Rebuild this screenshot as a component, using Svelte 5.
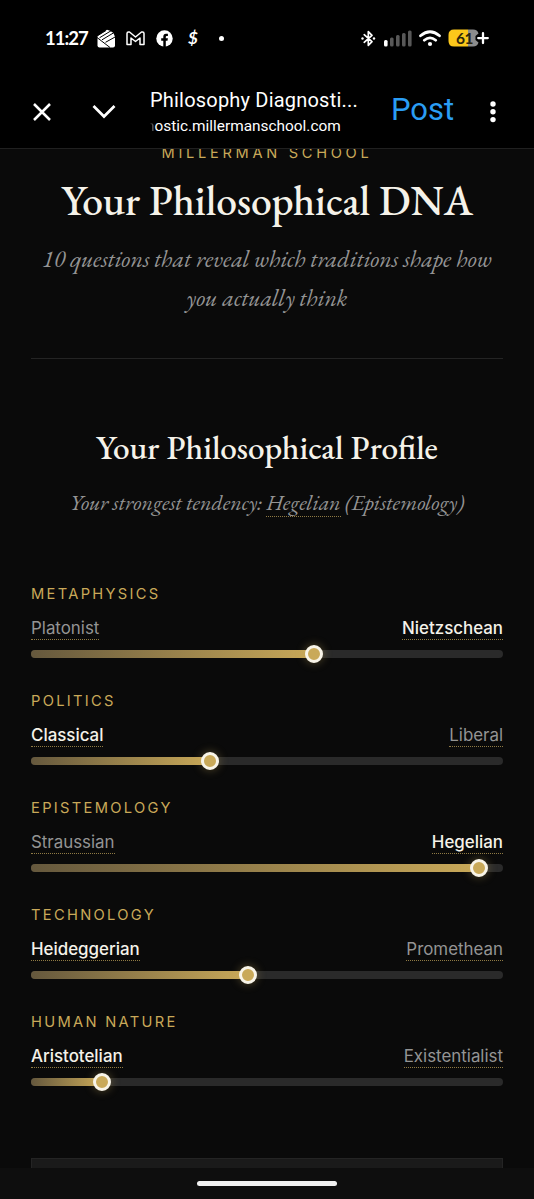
<script lang="ts">
  const title = "Philosophy Diagnosti...";

  // value is the thumb position in percent, lead is the side that wins
  const axes = [
    { name: "Metaphysics", left: "Platonist", right: "Nietzschean", value: 60, lead: "right" },
    { name: "Politics", left: "Classical", right: "Liberal", value: 38, lead: "left" },
    { name: "Epistemology", left: "Straussian", right: "Hegelian", value: 95, lead: "right" },
    { name: "Technology", left: "Heideggerian", right: "Promethean", value: 46, lead: "left" },
    { name: "Human Nature", left: "Aristotelian", right: "Existentialist", value: 15, lead: "left" },
  ];
</script>

<div class="phone">
  <div class="status">
    <span class="time">11:27</span>
    <svg class="mail" width="19" height="19" viewBox="0 0 19 19">
      <path d="M0.500 7 10 0.800 13 1.800 16.500 4 18 8V16.500Q18 18.500 16 18.500H2.500Q0.500 18.500 0.500 16.500Z" fill="#fff" />
      <path d="M0 7 9 1.500M2.500 8.800 14 1.800M5 10.800 17 3.600M0 8.500 13 18.500M8.500 13.300 19 7.500" stroke="#000" stroke-width="1" fill="none" />
    </svg>
    <svg class="gmail" width="19" height="15" viewBox="0 0 19 15">
      <path d="M1 13.500V2.500Q1 1 2.500 1H3.500L9.500 6 15.500 1H16.500Q18 1 18 2.500V13.500H14V7L9.500 10.500 5 7V13.500Z" fill="none" stroke="#fff" stroke-width="1.500" stroke-linejoin="round" />
    </svg>
    <svg class="fb" width="17" height="17" viewBox="0 0 17 17">
      <circle cx="8.500" cy="8.500" r="8.200" fill="#fff" />
      <path d="M7.300 17V10.800H5.200V8.200H7.300V6.700Q7.300 3.800 10 3.800H11.900V6.100H10.700Q9.800 6.100 9.800 7V8.200H11.900L11.500 10.800H9.800V17Z" fill="#000" />
    </svg>
    <span class="dollar">$</span>
    <i class="dot"></i>
    <svg class="bt" width="15" height="17" viewBox="0 0 15 17">
      <path d="M3.200 4.700 11 11.700 7.300 15.300V1.700L11 5.300 3.200 12.300" fill="none" stroke="#fff" stroke-width="1.700" stroke-linejoin="round" stroke-linecap="round" />
      <circle cx="1.500" cy="8.500" r="1.200" fill="#fff" />
      <circle cx="13" cy="8.500" r="1.200" fill="#fff" />
    </svg>
    <svg class="signal" width="28" height="17" viewBox="0 0 28 17">
      <rect x="0" y="10" width="3.600" height="6.500" rx="1.500" fill="#fff" />
      <rect x="6" y="7.500" width="3.600" height="9" rx="1.500" fill="#585858" />
      <rect x="12" y="5" width="3.600" height="11.500" rx="1.500" fill="#585858" />
      <rect x="18" y="3" width="3.600" height="13.500" rx="1.500" fill="#585858" />
      <rect x="24" y="0.500" width="3.600" height="16" rx="1.500" fill="#585858" />
    </svg>
    <svg class="wifi" width="22" height="17" viewBox="0 0 22 17">
      <path d="M1.500 5.800Q11-2.300 20.500 5.800M5.300 10.200Q11 5.400 16.700 10.200" fill="none" stroke="#fff" stroke-width="2.700" stroke-linecap="round" />
      <circle cx="11" cy="14" r="2.100" fill="#fff" />
    </svg>
    <svg class="battery" width="41" height="18" viewBox="0 0 41 18">
      <path d="M6 .5H20V17.500H6Q.5 17.500.5 12V6Q.5.500 6 .5Z" fill="#fcc81b" />
      <path d="M20 .5H25Q29.500.500 30.500 4.500L27.500 7V11L30.500 13.500Q29.500 17.500 25 17.500H20Z" fill="#8c8c8c" />
      <path d="M35 4.200V14M30.200 9.100H39.800" stroke="#fff" stroke-width="2.300" stroke-linecap="round" />
      <text x="8" y="14.500" class="level">61</text>
    </svg>
  </div>

  <div class="toolbar">
    <svg class="close" width="20" height="20" viewBox="0 0 20 20">
      <path d="M2 2 18 18M18 2 2 18" stroke="#fff" stroke-width="2.500" />
    </svg>
    <svg class="chevron" width="24" height="16" viewBox="0 0 24 16">
      <path d="M1.500 2 12 12.500 22.500 2" stroke="#fff" stroke-width="2.700" fill="none" />
    </svg>
    <div class="page">
      <div class="page-title">{title}</div>
      <div class="url"><span class="faded">n</span>ostic.millermanschool.com</div>
    </div>
    <span class="post">Post</span>
    <svg class="more" width="6" height="22" viewBox="0 0 6 22">
      <circle cx="3" cy="3" r="2.700" fill="#fff" />
      <circle cx="3" cy="10.800" r="2.700" fill="#fff" />
      <circle cx="3" cy="18.600" r="2.700" fill="#fff" />
    </svg>
  </div>

  <main>
    <header>
      <div class="brand">Millerman School</div>
      <h1>Your Philosophical DNA</h1>
      <p class="tagline">10 questions that reveal which traditions shape how<br />you actually think</p>
    </header>

    <h2>Your Philosophical Profile</h2>
    <p class="tendency">Your strongest tendency: <span class="term">Hegelian</span> (Epistemology)</p>

    {#each axes as axis}
      <section class="axis">
        <div class="axis-name">{axis.name}</div>
        <div class="ends">
          <span class:lead={axis.lead === "left"}>{axis.left}</span>
          <span class:lead={axis.lead === "right"}>{axis.right}</span>
        </div>
        <div class="track">
          <div class="fill" style="width: {axis.value}%">
            <i class="thumb"></i>
          </div>
        </div>
      </section>
    {/each}

    <div class="card"></div>
  </main>

  <div class="navbar"><i></i></div>
</div>

<style>
  :global(body) {
    margin: 0;
    background: #0a0a0a;
  }

  .phone {
    display: flex;
    flex-direction: column;
    width: 534px;
    height: 1199px;
    overflow: hidden;
    background: #0a0a0a;
    color: #fff;
    font-family: Inter, sans-serif;
  }

  .phone * {
    box-sizing: border-box;
  }

  svg {
    display: block;
    flex: none;
  }

  .status {
    display: flex;
    align-items: center;
    flex: none;
    height: 76px;
    padding-left: 45px;
    background: #000;
  }

  .time {
    width: 52px;
    margin-top: -1px;
    font: 700 18.5px/24px Lato, sans-serif;
    letter-spacing: -1px;
    white-space: nowrap;
  }

  .gmail {
    margin-left: 10px;
  }

  .fb {
    margin-left: 11px;
  }

  .dollar {
    width: 12px;
    margin-left: 15px;
    font: italic 700 17px/24px Lato, sans-serif;
  }

  .dot {
    width: 5px;
    height: 5px;
    margin-left: 19px;
    border-radius: 50%;
    background: #fff;
  }

  .bt {
    margin-left: 137px;
  }

  .signal {
    margin-left: 8px;
  }

  .wifi {
    margin-left: 7px;
  }

  .battery {
    margin-left: 7px;
  }

  .level {
    font: 700 15.5px Lato, sans-serif;
    letter-spacing: -0.5px;
    fill: #2d260c;
  }

  .toolbar {
    display: flex;
    align-items: center;
    flex: none;
    height: 73px;
    padding-left: 32px;
    border-bottom: 1px solid #202020;
    background: #000;
  }

  .chevron {
    margin-left: 40px;
  }

  .page {
    width: 208px;
    margin-left: 34px;
    padding-top: 2px;
    white-space: nowrap;
  }

  .page-title {
    font: 400 20px/27px Roboto, sans-serif;
    letter-spacing: 0.2px;
  }

  .url {
    margin-left: -4px;
    font: 400 15.4px/25px Roboto, sans-serif;
  }

  .faded {
    background: linear-gradient(90deg, #000 40%, #999);
    background-clip: text;
    -webkit-background-clip: text;
    color: transparent;
  }

  .post {
    width: 66px;
    margin-top: -4px;
    margin-left: 33px;
    color: #2a9df4;
    font: 400 31px/40px Roboto, sans-serif;
  }

  .more {
    margin-left: 33px;
  }

  main {
    flex: 1;
    min-height: 0;
    padding: 0 31px;
    overflow: hidden;
  }

  header {
    height: 217px;
    border-bottom: 1px solid #242424;
    text-align: center;
  }

  .brand {
    margin-top: -7px;
    color: #c9a959;
    font-size: 14.6px;
    line-height: 22px;
    letter-spacing: 3.7px;
    text-transform: uppercase;
  }

  h1,
  h2,
  p {
    margin: 0;
    white-space: nowrap;
    text-align: center;
    font-family: "EB Garamond", "Liberation Serif", serif;
  }

  h1 {
    margin-top: 8px;
    color: #f5f2e9;
    font-size: 41.6px;
    font-weight: 500;
    line-height: 56px;
  }

  .tagline {
    margin-top: 11px;
    color: #949494;
    font-size: 23.9px;
    font-style: italic;
    line-height: 39px;
  }

  h2 {
    margin-top: 66px;
    color: #f5f2e9;
    font-size: 33.3px;
    font-weight: 500;
    line-height: 44px;
  }

  .tendency {
    margin: 16px 0 65px;
    color: #949494;
    font-size: 21.8px;
    font-style: italic;
    line-height: 34px;
  }

  .term {
    border-bottom: 1px dotted #8f7a44;
  }

  .axis {
    margin-bottom: 33px;
  }

  .axis-name {
    margin-bottom: 13px;
    color: #c9a959;
    font-size: 14.7px;
    line-height: 20px;
    letter-spacing: 2.3px;
    text-transform: uppercase;
  }

  .ends {
    display: flex;
    justify-content: space-between;
    margin-bottom: 10px;
    color: #949494;
    font-size: 16.9px;
    line-height: 22px;
  }

  .ends span {
    border-bottom: 1px dotted #8f7a44;
  }

  .ends .lead {
    color: #f5f2e9;
    font-weight: 500;
  }

  .track {
    height: 8px;
    border-radius: 4px;
    background: #2a2a2a;
  }

  .fill {
    position: relative;
    height: 8px;
    border-radius: 4px;
    background: linear-gradient(90deg, #65583d, #c9a959);
  }

  .thumb {
    position: absolute;
    top: -5px;
    right: -9px;
    width: 18px;
    height: 18px;
    border: 3px solid #f8f4e8;
    border-radius: 50%;
    background: #c9a959;
    box-shadow: 0 0 10px rgba(201, 169, 89, 0.4);
  }

  .card {
    height: 80px;
    margin-top: 72px;
    border: 1px solid #242424;
    background: #1a1a1a;
  }

  .navbar {
    display: flex;
    justify-content: center;
    flex: none;
    height: 31px;
    padding-top: 13px;
    background: #0e0e0e;
  }

  .navbar i {
    width: 140px;
    height: 5px;
    border-radius: 3px;
    background: #f0f0f0;
  }
</style>
